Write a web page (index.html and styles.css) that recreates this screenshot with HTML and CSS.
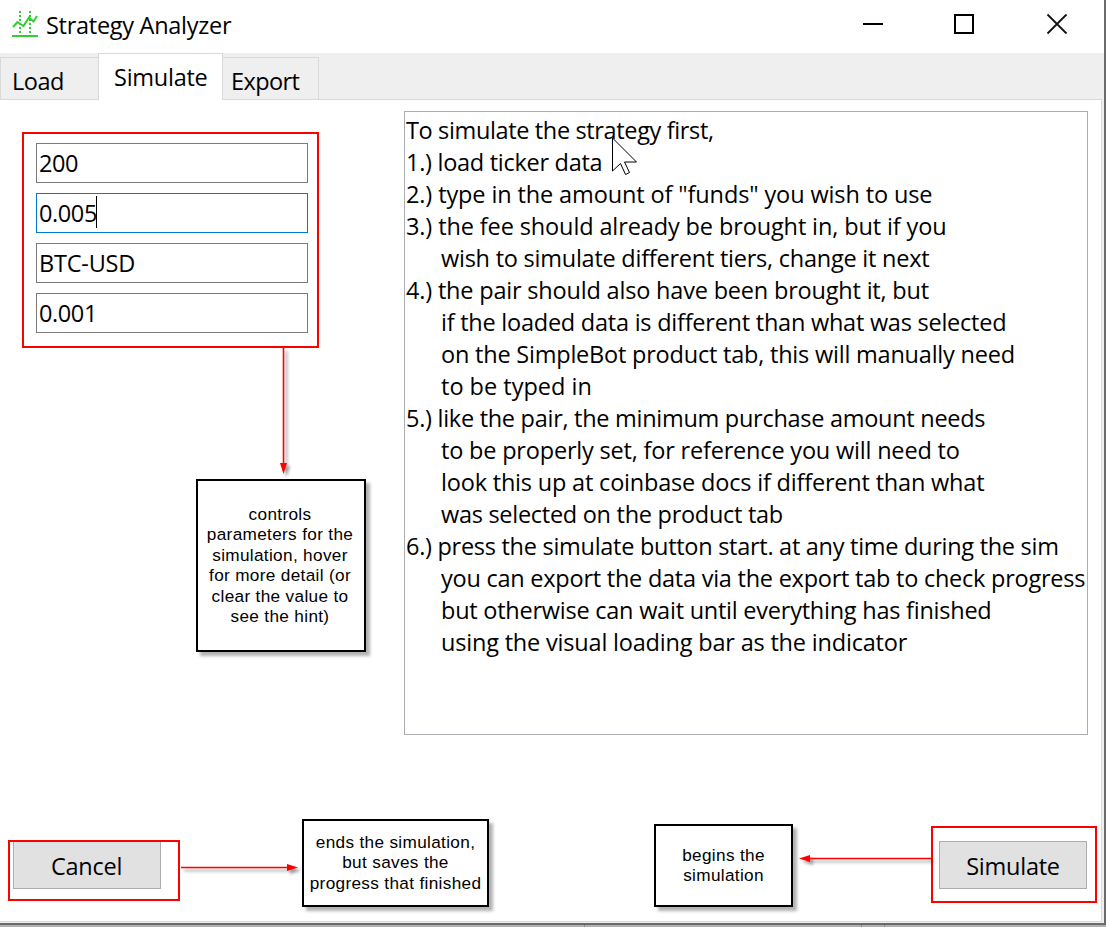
FILE: index.html
```
<!DOCTYPE html>
<html lang="en">
<head>
<meta charset="utf-8">
<title>Strategy Analyzer</title>
<link rel="stylesheet" href="styles.css">
</head>
<body>
<div class="window">
  <header class="titlebar">
    <svg class="logo" width="28" height="28" viewBox="0 0 28 28"><path d="M1 26h26" stroke="#32cd32" stroke-width="2"/><path d="M9 1v22M19 1v22" stroke="#32cd32" stroke-width="2" stroke-dasharray="2 2"/><path d="M2 17l4.500-5 6 4 5.500-8.500 4.500 4L26 6" fill="none" stroke="#32cd32" stroke-width="2"/></svg>
    <h1 class="title">Strategy Analyzer</h1>
    <svg class="controls" width="206" height="22" viewBox="0 0 206 22"><path d="M0 11h20" stroke="#000" stroke-width="2"/><rect x="92" y="2" width="18" height="18" fill="none" stroke="#000" stroke-width="2"/><path d="M184.500 1.500l19 19M203.500 1.500l-19 19" stroke="#111" stroke-width="1.800"/></svg>
  </header>
  <nav class="tabs">
    <div class="tab load">Load</div>
    <div class="tab active">Simulate</div>
    <div class="tab export">Export</div>
  </nav>
  <main class="panel">
    <section class="top">
      <div class="left">
        <div class="frame fields">
          <div class="field">200</div>
          <div class="field focus">0.005<i class="caret"></i></div>
          <div class="field">BTC-USD</div>
          <div class="field">0.001</div>
        </div>
        <svg class="arrow down" width="24" height="131" viewBox="0 0 24 131"><path class="line" d="M11.500 0v116"/><path class="head" d="M8 115h7l-3.500 11z"/></svg>
        <div class="note controls-note">controls<br>parameters for the<br>simulation, hover<br>for more detail (or<br>clear the value to<br>see the hint)</div>
      </div>
      <div class="help">
        <p class="s35">To simulate the strategy first,</p>
        <p class="s27">1.) load ticker data</p>
        <p class="s12">2.) type in the amount of "funds" you wish to use</p>
        <p class="s12">3.) the fee should already be brought in, but if you</p>
        <p class="in s23">wish to simulate different tiers, change it next</p>
        <p class="s18">4.) the pair should also have been brought it, but</p>
        <p class="in s23">if the loaded data is different than what was selected</p>
        <p class="in s20">on the SimpleBot product tab, this will manually need</p>
        <p class="in">to be typed in</p>
        <p class="s27">5.) like the pair, the minimum purchase amount needs</p>
        <p class="in s18">to be properly set, for reference you will need to</p>
        <p class="in s18">look this up at coinbase docs if different than what</p>
        <p class="in s27">was selected on the product tab</p>
        <p class="s27">6.) press the simulate button start. at any time during the sim</p>
        <p class="in s23">you can export the data via the export tab to check progress</p>
        <p class="in s23">but otherwise can wait until everything has finished</p>
        <p class="in s18">using the visual loading bar as the indicator</p>
        <svg class="cursor" width="26" height="40" viewBox="0 0 26 40"><path d="M.5 1v33l8-7.500 5 11 4-2-5-10.500h12z" fill="#fff" stroke="#000"/></svg>
      </div>
    </section>
    <section class="bottom">
      <div class="frame cancel"><div class="button">Cancel</div></div>
      <svg class="arrow right" width="122" height="24" viewBox="0 0 122 24"><path class="line" d="M1 11.500h108"/><path class="head" d="M107 8v7l11-3.500z"/></svg>
      <div class="note ends-note">ends the simulation,<br>but saves the<br>progress that finished</div>
      <div class="note begins-note">begins the<br>simulation</div>
      <svg class="arrow back" width="138" height="24" viewBox="0 0 138 24"><path class="line" d="M16 11.500h122"/><path class="head" d="M17 8v7L6 11.500z"/></svg>
      <div class="frame simulate"><div class="button">Simulate</div></div>
    </section>
  </main>
</div>
<footer class="desktop"><i></i><i></i><i></i></footer>
</body>
</html>
```
FILE: styles.css
```
* { box-sizing: border-box; }
body {
  margin: 0;
  height: 927px;
  overflow: hidden;
  font: 23.5px/32px "Open Sans", sans-serif;
  color: #000;
  background: #fff;
}
.window {
  height: 925px;
  background: #efefef;
  border-right: 2px solid #6b6b6b;
  border-bottom: 2px solid #686b69;
}
.titlebar {
  display: flex;
  height: 53px;
  padding-left: 11px;
  background: #fff;
}
.logo { margin-top: 10px; flex: none; }
.title {
  width: 817px;
  margin: 9px 0 0 7px;
  font: inherit;
  letter-spacing: -.28px;
}
.controls { margin-top: 13px; flex: none; }
.tabs {
  display: flex;
  align-items: flex-end;
  height: 46px;
}
.tab {
  height: 42px;
  border: 1px solid #d9d9d9;
  border-bottom: 0;
  line-height: 46px;
}
.load { width: 98px; padding-left: 11px; border-right: 0; letter-spacing: -.5px; }
.active {
  position: relative;
  width: 125px;
  height: 47px;
  margin-bottom: -1px;
  padding-left: 15px;
  background: #fff;
  line-height: 46px;
  letter-spacing: -.25px;
}
.export { width: 96px; padding-left: 8px; border-left: 0; letter-spacing: -.6px; }
.panel {
  width: 1102px;
  height: 823px;
  border-top: 1px solid #d9d9d9;
  border-right: 1px solid #d9d9d9;
  border-bottom: 1px solid #d9d9d9;
  background: #fff;
}
.top {
  display: flex;
  height: 719px;
}
.left { width: 404px; padding: 32px 0 0 22px; }
.frame { border: 2px solid #f00; }
.fields {
  display: grid;
  gap: 10px;
  align-content: start;
  width: 297px;
  height: 216px;
  padding: 9px 9px 0 12px;
}
.field {
  display: flex;
  height: 40px;
  padding-left: 2px;
  border: 1px solid #7a7a7a;
  line-height: 39px;
  letter-spacing: -.4px;
}
.field:nth-child(3) { letter-spacing: -.2px; }
.focus { border-color: #0078d7; }
.caret { width: 1px; height: 32px; margin: 2px 0 0 -1px; background: #000; }
.arrow { display: block; flex: none; overflow: visible; filter: drop-shadow(3px 3px 1.5px rgba(0, 0, 0, .4)); }
.line { fill: none; stroke: #f00; stroke-width: 1.6; }
.head { fill: #f00; }
.down { margin-left: 250px; }
.note {
  flex: none;
  border: 2px solid #000;
  background: #fff;
  box-shadow: 4px 4px 3px rgba(0, 0, 0, .3);
  font: 17.2px/20.4px "Liberation Sans", Arial, sans-serif;
  letter-spacing: .33px;
  text-align: center;
  white-space: nowrap;
}
.controls-note { width: 170px; height: 173px; margin-left: 174px; padding: 23px 2px 0 0; line-height: 20.4px; }
.help {
  position: relative;
  width: 684px;
  height: 624px;
  margin-top: 11px;
  padding: 2px 0 0 1px;
  border: 1px solid #abadb3;
  white-space: nowrap;
}
.help p { margin: 0; }
.help .in { padding-left: 35px; }
.s12 { letter-spacing: -.12px; }
.s18 { letter-spacing: -.19px; }
.s20 { letter-spacing: -.21px; }
.s23 { letter-spacing: -.24px; }
.s27 { letter-spacing: -.28px; }
.s35 { letter-spacing: -.36px; }
.cursor { position: absolute; left: 207px; top: 25px; }
.bottom {
  display: flex;
  align-items: flex-start;
  padding-left: 8px;
}
.cancel { flex: none; width: 172px; height: 61px; margin-top: 21px; padding-left: 3px; }
.button {
  width: 148px;
  height: 48px;
  border: 1px solid #adadad;
  background: #e1e1e1;
  line-height: 49px;
  text-align: center;
  letter-spacing: -.25px;
}
.cancel .button { height: 47px; border-top: 0; padding-right: 1px; }
.right { margin-top: 37px; }
.ends-note { width: 187px; height: 88px; padding-top: 11px; }
.begins-note { width: 139px; height: 83px; margin: 5px 0 0 165px; padding-top: 19px; }
.back { margin-top: 28px; }
.simulate { flex: none; width: 166px; height: 77px; margin-top: 7px; padding: 13px 0 0 6px; }
.desktop {
  display: flex;
  gap: 1px;
  height: 2px;
  background: #b0b0b0;
}
.desktop i { width: 1px; background: #858585; }
.desktop i:nth-child(1) { margin-left: 584px; }
.desktop i:nth-child(2) { margin-left: 275px; }
.desktop i:nth-child(3) { margin-left: 21px; }
```
